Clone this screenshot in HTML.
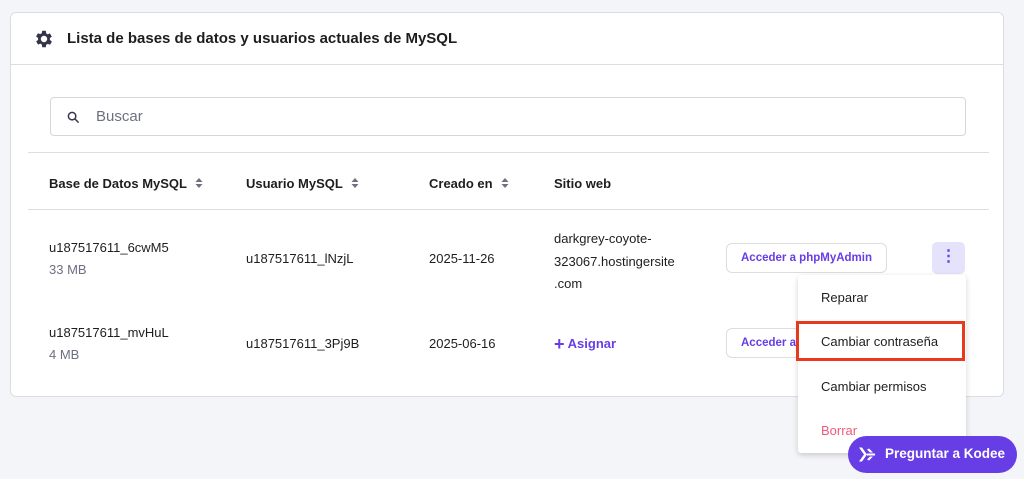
<!DOCTYPE html>
<html><head><meta charset="utf-8"><style>
*{box-sizing:border-box;margin:0;padding:0}
body{width:1024px;height:479px;background:#f4f5f8;font-family:"Liberation Sans",sans-serif;position:relative;overflow:hidden;color:#2f1c6a}
.card{position:absolute;left:10px;top:12px;width:994px;height:385px;background:#fff;border:1px solid #dcdde3;border-radius:6px}
.hdr{position:absolute;left:0;top:0;width:100%;height:52px;border-bottom:1px solid #dcdde3}
.hdr span{position:absolute;left:56px;top:17px;font-size:15px;font-weight:bold;color:#1d1e20}
.search{position:absolute;left:39px;top:84px;width:916px;height:39px;border:1px solid #d5d6db;border-radius:4px}
.search span{position:absolute;left:45px;top:10px;font-size:15px;color:#6d7081}
.line{position:absolute;left:17px;width:961px;height:1px;background:#dcdde3}
.t{position:absolute;font-size:13px;color:#1d1e20}
.b{font-weight:bold}
.s{color:#6d7081}
.arr{display:inline-block;margin-left:8px;vertical-align:0px}
.btn{position:absolute;height:30px;border:1px solid #dcdde3;border-radius:6px;background:#fff;font-size:11.5px;font-weight:bold;color:#673de6;padding:8px 14px}
.menu{position:absolute;left:798px;top:275px;width:168px;height:178px;background:#fff;box-shadow:0 2px 6px rgba(0,0,0,.18);border-radius:3px}
.menu div{position:absolute;left:23px;font-size:13px;color:#1d1e20}
</style></head><body>
<div class="card">
 <div class="hdr">
  <svg style="position:absolute;left:22px;top:15px" width="22" height="22" viewBox="0 0 24 24"><path fill="#36344d" d="M19.4 13a7.5 7.5 0 000-2l2.1-1.6-2-3.5-2.5 1a7 7 0 00-1.7-1L15 3h-4l-.4 2.7a7 7 0 00-1.7 1l-2.5-1-2 3.5L6.6 11a7.5 7.5 0 000 2l-2.1 1.6 2 3.5 2.5-1a7 7 0 001.7 1L11 21h4l.4-2.7a7 7 0 001.7-1l2.5 1 2-3.5zM13 15.5a3.5 3.5 0 110-7 3.5 3.5 0 010 7z" transform="translate(-1 0)"/></svg>
  <span>Lista de bases de datos y usuarios actuales de MySQL</span>
 </div>
 <div class="search">
  <svg style="position:absolute;left:16px;top:13px" width="13" height="13" viewBox="0 0 14 14"><circle cx="5.5" cy="5.5" r="4" fill="none" stroke="#36344d" stroke-width="1.6"/><path d="M8.5 8.5L12.5 12.5" stroke="#36344d" stroke-width="1.6"/></svg>
  <span>Buscar</span>
 </div>
 <div class="line" style="top:139px"></div>
 <div class="line" style="top:196px"></div>
</div>
<div class="t b" style="left:49px;top:176px">Base de Datos MySQL<svg class="arr" width="8" height="10" viewBox="0 0 8 10"><path d="M4 0L7.5 4H.5zM4 10L7.5 6H.5z" fill="#6d7081"/></svg></div>
<div class="t b" style="left:246px;top:176px">Usuario MySQL<svg class="arr" width="8" height="10" viewBox="0 0 8 10"><path d="M4 0L7.5 4H.5zM4 10L7.5 6H.5z" fill="#6d7081"/></svg></div>
<div class="t b" style="left:429px;top:176px">Creado en<svg class="arr" width="8" height="10" viewBox="0 0 8 10"><path d="M4 0L7.5 4H.5zM4 10L7.5 6H.5z" fill="#6d7081"/></svg></div>
<div class="t b" style="left:554px;top:176px">Sitio web</div>
<div class="t" style="left:49px;top:240px">u187517611_6cwM5</div>
<div class="t s" style="left:49px;top:262px">33 MB</div>
<div class="t" style="left:246px;top:251px">u187517611_lNzjL</div>
<div class="t" style="left:429px;top:251px">2025-11-26</div>
<div class="t" style="left:554px;top:228px;line-height:22.5px">darkgrey-coyote-<br>323067.hostingersite<br>.com</div>
<div class="btn" style="left:726px;top:243px;width:161px">Acceder a phpMyAdmin</div>
<div style="position:absolute;left:932px;top:242px;width:33px;height:32px;background:#e5e3fb;border-radius:5px;color:#673de6;font-size:16px;text-align:center;line-height:30px;font-weight:bold">⋮</div>
<div class="t" style="left:49px;top:325px">u187517611_mvHuL</div>
<div class="t s" style="left:49px;top:347px">4 MB</div>
<div class="t" style="left:246px;top:336px">u187517611_3Pj9B</div>
<div class="t" style="left:429px;top:336px">2025-06-16</div>
<div class="t b" style="left:554px;top:334px;color:#673de6"><span style="font-size:18px;vertical-align:-2px">+</span> Asignar</div>
<div class="btn" style="left:726px;top:328px;width:161px">Acceder a phpMyAdmin</div>
<div class="menu">
 <div style="top:15px">Reparar</div>
 <div style="top:59px">Cambiar contraseña</div>
 <div style="top:104px">Cambiar permisos</div>
 <div style="top:148px;color:#ef5a7c">Borrar</div>
</div>
<div style="position:absolute;left:796px;top:321px;width:169px;height:40px;border:3px solid #e8391f"></div>
<div style="position:absolute;left:848px;top:436px;width:169px;height:37px;background:#673de6;border-radius:19px;color:#fff;font-weight:bold;font-size:13.5px">
 <svg style="position:absolute;left:10px;top:9px" width="18" height="19" viewBox="0 0 18 18"><path fill="#fff" d="M1 2l5 7-5 7h3l5-7-5-7zM9 8h8v2H9zM11 3l4 4h-3L9 4zM11 15l4-4h-3l-3 3z"/></svg>
 <span style="position:absolute;left:37px;top:10px">Preguntar a Kodee</span>
</div>
</body></html>
